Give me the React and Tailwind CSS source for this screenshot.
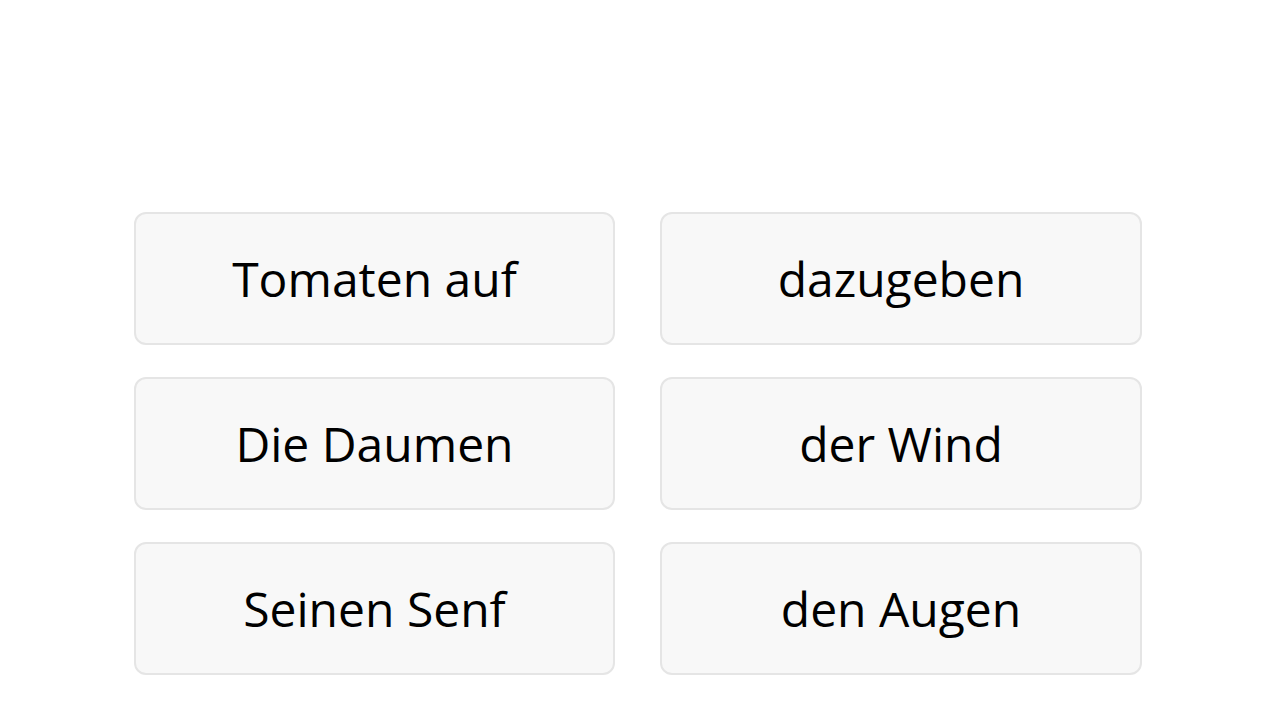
import React from 'react';

const words = ['Tomaten auf', 'dazugeben', 'Die Daumen', 'der Wind', 'Seinen Senf', 'den Augen'];

const App = () => {
  return (
    <div
      className="w-[1280px] h-[720px] bg-white pt-[212px] pl-[134px]"
      style={{ fontFamily: '"Open Sans", sans-serif' }}
    >
      <div className="grid grid-cols-[481px_482px] gap-x-[45px] gap-y-[32px]">
        {words.map((w) => (
          <button
            key={w}
            className="h-[133px] flex items-center justify-center rounded-[12px] border-2 border-[#e5e5e5] bg-[#f8f8f8] text-[48px] leading-none text-black"
          >
            {w}
          </button>
        ))}
      </div>
    </div>
  );
};

export default App;
